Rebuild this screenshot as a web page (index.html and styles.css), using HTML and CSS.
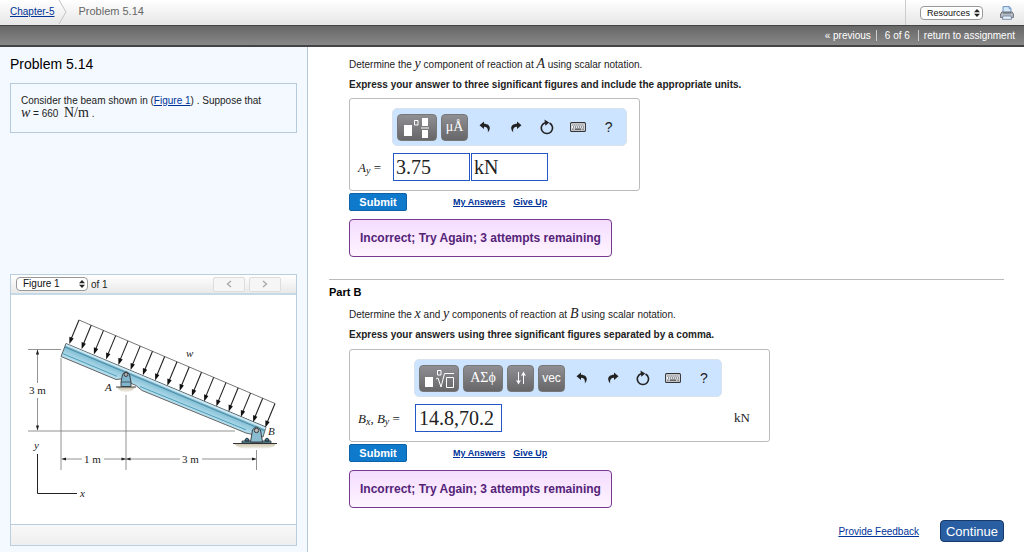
FILE: index.html
```html
<!DOCTYPE html>
<html lang="en">
<head>
<meta charset="utf-8">
<title>Problem 5.14</title>
<link rel="stylesheet" href="styles.css">
</head>
<body>
<svg class="defs" aria-hidden="true">
  <defs>
    <symbol id="undo" viewBox="0 0 12 12"><path d="M5 0.5L0.5 4.2L5 8V5.8C8 5.8 9.4 7.5 8.8 11.5C12.2 8 11.5 2.8 5 2.7Z" fill="#222"/></symbol>
    <symbol id="redo" viewBox="0 0 12 12"><path d="M7 0.5L11.5 4.2L7 8V5.8C4 5.8 2.6 7.5 3.2 11.5C-0.2 8 0.5 2.8 7 2.7Z" fill="#222"/></symbol>
    <symbol id="reset" viewBox="0 0 14 16"><path d="M9.5 4A5.600 5.600 0 1 1 5 3.700" fill="none" stroke="#222" stroke-width="1.600"/><path d="M4.400 0.600L9.200 3.400L5.400 6.800Z" fill="#222"/></symbol>
    <symbol id="keys" viewBox="0 0 16 10"><rect x="0.600" y="0.600" width="14.800" height="8.800" rx="1" fill="#f2f7fc" stroke="#333" stroke-width="1.100"/><path d="M2.300 3H14M3 5H14" stroke="#333" stroke-width="1.100" stroke-dasharray="1.200 0.800"/><path d="M2.300 7.100H3.600M4.600 7.100H11.400M12.400 7.100H13.800" stroke="#333" stroke-width="1.100"/></symbol>
    <symbol id="updown" viewBox="0 0 6 8"><path d="M3 0L6 3.300H0ZM3 8L0 4.700H6Z" fill="#222"/></symbol>
  </defs>
</svg>

<header class="crumbs">
  <nav class="trail" aria-label="Breadcrumb">
    <a href="#">Chapter-5</a>
    <svg class="chevron" viewBox="0 0 10 24" aria-hidden="true"><path d="M1 0L8 12L1 24" fill="none" stroke="#c4c4c4"/></svg>
    <span>Problem 5.14</span>
  </nav>
  <div class="tools">
    <span class="picker resources">
      <select aria-label="Resources"><option>Resources</option></select>
      <svg aria-hidden="true"><use href="#updown"/></svg>
    </span>
    <button class="print" type="button" aria-label="Print">
      <svg viewBox="0 0 14 14" aria-hidden="true">
        <path d="M3 7V0.600H9.200L11 2.400V7Z" fill="#d4e8fa" stroke="#6b91bd"/>
        <path d="M9 0.600V2.600H11" fill="none" stroke="#6b91bd" stroke-width="0.800"/>
        <path d="M1.800 6H12.200L13.400 8V11.500H0.600V8Z" fill="#b9bec5" stroke="#6d737b"/>
        <path d="M2.800 7H11.200" stroke="#55606c"/>
        <path d="M3 10H11L11.600 13.300H2.400Z" fill="#e9f2fb" stroke="#6f86a3" stroke-width="0.900"/>
      </svg>
    </button>
  </div>
</header>
<nav class="pager" aria-label="Assignment">
  <a href="#">« previous</a><span class="count">6 of 6</span><a href="#">return to assignment</a>
</nav>

<div class="columns">
  <aside class="side">
    <h1>Problem 5.14</h1>
    <p class="intro">Consider the beam shown in (<a href="#figure">Figure 1</a>) . Suppose that<br><i class="math">w</i> = 660 &nbsp;<span class="math">N/m</span> .</p>

    <section class="figure" id="figure">
      <div class="figure-bar">
        <span class="picker fig">
          <select id="fig-no"><option>Figure 1</option></select>
          <svg aria-hidden="true"><use href="#updown"/></svg>
        </span>
        <label for="fig-no">of 1</label>
        <div class="steps">
          <button type="button" aria-label="Previous figure"><svg viewBox="0 0 8 8"><path d="M6 1L2.500 4L6 7" /></svg></button>
          <button type="button" aria-label="Next figure"><svg viewBox="0 0 8 8"><path d="M2 1L5.500 4L2 7" /></svg></button>
        </div>
      </div>
      <svg class="drawing" viewBox="11 295 285 229" role="img" aria-label="Inclined beam with distributed load w, supported at A and B">
        <defs>
          <linearGradient id="steel" gradientUnits="userSpaceOnUse" x1="166" y1="384" x2="161" y2="396">
            <stop offset="0" stop-color="#4f9fbd"/><stop offset="0.500" stop-color="#8cc5da"/><stop offset="1" stop-color="#b5dceb"/>
          </linearGradient>
          <linearGradient id="ground" x1="0" y1="0" x2="0" y2="1">
            <stop offset="0" stop-color="#c6bfa9"/><stop offset="1" stop-color="#f4f2ea"/>
          </linearGradient>
          <g id="load"><path d="M0 0L-8.300 20" stroke="#222" stroke-width="1.100"/><path d="M-9.600 24L-9.600 16.800L-5.300 18.500Z" fill="#111"/></g>
        </defs>
        <g stroke="#777" stroke-width="0.800" fill="none">
          <path d="M28 349.500H61M28 431H235M61 358V470M126 395V470M256.500 450V470"/>
          <path d="M37.500 350V383M37.500 398V430M62 459H82M104 459H180M202 459H256"/>
        </g>
        <g fill="#222">
          <path d="M37.500 349.500l-1.600 5h3.200zM37.500 430.500l-1.600-5h3.200zM61.500 459l4.500-1.500v3zM126 459l-4.500-1.500v3zM126 459l4.500-1.500v3zM256.500 459l-4.500-1.500v3z"/>
        </g>
        <path d="M37.500 454V493.500H77" fill="none" stroke="#222"/>
        <path d="M66 343.500L266 427L263 437L246 433L142 390.500L136 385.500L121 379L116 379.500L61 356.500Z" fill="url(#steel)" stroke="#444" stroke-width="0.800"/>
        <path d="M66 344.800L265.500 428.300" stroke="#cfe8f2" stroke-width="2"/>
        <path d="M65 347L264 430.500" stroke="#38758e" stroke-width="0.700"/>
        <path d="M62.500 353.500L117 376.300M140 386.500L246 429.800" stroke="#2d8fac" stroke-width="0.800"/>
        <path d="M79 320L275 403.500" stroke="#555" stroke-width="0.800"/>
        <use href="#load" x="79" y="320"/><use href="#load" x="91.200" y="325.200"/><use href="#load" x="103.500" y="330.400"/><use href="#load" x="115.700" y="335.600"/><use href="#load" x="128" y="340.900"/><use href="#load" x="140.200" y="346.100"/><use href="#load" x="152.500" y="351.300"/><use href="#load" x="164.700" y="356.500"/><use href="#load" x="177" y="361.700"/><use href="#load" x="189.200" y="367"/><use href="#load" x="201.500" y="372.200"/><use href="#load" x="213.700" y="377.400"/><use href="#load" x="226" y="382.600"/><use href="#load" x="238.200" y="387.800"/><use href="#load" x="250.500" y="393.100"/><use href="#load" x="262.700" y="398.300"/><use href="#load" x="275" y="403.500"/>
        <path d="M117 387H135Q133 392 126 392Q119 392 117 387Z" fill="url(#ground)"/>
        <path d="M116 387H136" stroke="#444"/>
        <path d="M121 386.500V382L122.500 374.500Q126 369 129.500 374.500L131 382V386.500Z" fill="#7fb6cd" stroke="#333" stroke-width="0.900"/>
        <path d="M121 382H131" stroke="#333" stroke-width="0.700"/>
        <circle cx="126" cy="374.500" r="2" fill="#aaa" stroke="#333" stroke-width="0.900"/>
        <path d="M234 443.500H276Q274 449 262 448.500H247Q238 449 234 443.500Z" fill="url(#ground)"/>
        <path d="M233 443.500H277" stroke="#333"/>
        <path d="M242 443V441H271V443Z" fill="#5b9cb8" stroke="#333" stroke-width="0.800"/>
        <path d="M245 441V439.500L247 438L249 439.500V441ZM265 441V439.500L267 438L269 439.500V441Z" fill="#397b97" stroke="#222" stroke-width="0.900"/>
        <path d="M250.500 442L252.500 430Q256.500 424 260.500 430L262.500 442Z" fill="#8bbdd2" stroke="#333" stroke-width="0.900"/>
        <circle cx="256.500" cy="430.500" r="2.200" fill="#bbb" stroke="#333" stroke-width="0.900"/>
        <g class="labels">
          <text x="29" y="394">3 m</text><text x="84" y="463">1 m</text><text x="182" y="463">3 m</text>
          <g font-style="italic"><text x="186" y="357">w</text><text x="105" y="391">A</text><text x="268" y="435">B</text><text x="34" y="449">y</text><text x="80" y="497">x</text></g>
        </g>
      </svg>
      <div class="figure-foot"></div>
    </section>
  </aside>

  <main class="main">
    <section class="part">
      <p class="ask">Determine the <i class="math">y</i> component of reaction at <i class="math">A</i> using scalar notation.</p>
      <p class="express">Express your answer to three significant figures and include the appropriate units.</p>
      <form class="answer answer-a">
        <div class="palette">
          <button class="key wide" type="button" aria-label="Templates"><svg viewBox="0 0 30 22"><path d="M2 9H10V20H2ZM20 2H26V10H20ZM20 14H26V22H20ZM19 11.400H27V12.600H19Z" fill="#fff"/><path d="M12.500 4.500H16V9H12.500Z" fill="none" stroke="#fff"/></svg></button>
          <button class="key serif" type="button">μÅ</button>
          <button class="ico" type="button" aria-label="Undo"><svg><use href="#undo"/></svg></button>
          <button class="ico" type="button" aria-label="Redo"><svg><use href="#redo"/></svg></button>
          <button class="ico reset" type="button" aria-label="Reset"><svg><use href="#reset"/></svg></button>
          <button class="ico keys" type="button" aria-label="Keyboard"><svg><use href="#keys"/></svg></button>
          <button class="ico" type="button" aria-label="Help">?</button>
        </div>
        <div class="entry">
          <label for="ay"><i>A<sub>y</sub></i> =</label>
          <input id="ay" type="text" value="3.75">
          <input type="text" value="kN" aria-label="Units">
        </div>
      </form>
      <div class="actions"><button class="submit" type="button">Submit</button><a href="#">My Answers</a><a href="#">Give Up</a></div>
      <p class="verdict">Incorrect; Try Again; 3 attempts remaining</p>
    </section>

    <section class="part part-b">
      <h2>Part B</h2>
      <p class="ask">Determine the <i class="math">x</i> and <i class="math">y</i> components of reaction at <i class="math">B</i> using scalar notation.</p>
      <p class="express">Express your answers using three significant figures separated by a comma.</p>
      <form class="answer answer-b">
        <div class="palette">
          <button class="key wide" type="button" aria-label="Roots"><svg viewBox="0 0 30 22"><path d="M1 10H9V20H1Z" fill="#fff"/><path d="M13.500 3.500H17V8H13.500ZM22.500 10.500H29.500V20.500H22.500ZM12 12L14 11L17 20L20.500 6.500H30" fill="none" stroke="#fff"/></svg></button>
          <button class="key wide serif" type="button">ΑΣϕ</button>
          <button class="key" type="button" aria-label="Subscript and superscript"><svg class="arrows" viewBox="0 0 12 14"><path d="M3.500 1V12M8.500 13V2" fill="none" stroke="#fff"/><path d="M1 9L3.500 10L6 9L3.500 13.500ZM6 5L8.500 4L11 5L8.500 0.500Z" fill="#fff"/></svg></button>
          <button class="key" type="button">vec</button>
          <button class="ico" type="button" aria-label="Undo"><svg><use href="#undo"/></svg></button>
          <button class="ico" type="button" aria-label="Redo"><svg><use href="#redo"/></svg></button>
          <button class="ico reset" type="button" aria-label="Reset"><svg><use href="#reset"/></svg></button>
          <button class="ico keys" type="button" aria-label="Keyboard"><svg><use href="#keys"/></svg></button>
          <button class="ico" type="button" aria-label="Help">?</button>
        </div>
        <div class="entry">
          <label for="bxy"><i>B<sub>x</sub></i>, <i>B<sub>y</sub></i> =</label>
          <input id="bxy" type="text" value="14.8,70.2">
          <span class="unit">kN</span>
        </div>
      </form>
      <div class="actions"><button class="submit" type="button">Submit</button><a href="#">My Answers</a><a href="#">Give Up</a></div>
      <p class="verdict">Incorrect; Try Again; 3 attempts remaining</p>
    </section>

    <footer class="foot"><a href="#">Provide Feedback</a><button class="continue" type="button">Continue</button></footer>
  </main>
</div>
</body>
</html>
```
FILE: styles.css
```css
* { box-sizing: border-box; }
body { margin: 0; min-height: 100vh; display: flex; flex-direction: column; font: 10px/13px "Liberation Sans", Arial, sans-serif; color: #222; background: #fff; }
p, h1, h2 { margin: 0; }
button, select, input { font-family: inherit; margin: 0; }
button { padding: 0; border: 0; background: none; }
a { color: #003399; }
.defs { position: absolute; width: 0; height: 0; }
.math { font-family: "Liberation Serif", serif; font-size: 14px; line-height: 12px; }

.crumbs { display: flex; justify-content: space-between; height: 25px; background: linear-gradient(#fff, #e6e6e6); }
.trail { display: flex; align-items: center; padding-left: 10px; padding-bottom: 2px; color: #666; }
.trail span { padding-left: 10px; font-size: 11px; }
.chevron { width: 10px; height: 24px; margin-left: 4px; }
.tools { display: flex; align-items: center; gap: 17px; padding: 0 10px 0 14px; border-left: 1px solid #ccc; }
.picker { position: relative; display: flex; }
.picker select { appearance: none; width: 100%; height: 14px; padding: 0 6px; border: 1px solid #999; border-radius: 4px; background: #fff; color: #111; font-size: 10px; line-height: 12px; }
.picker svg { position: absolute; right: 3px; top: 3px; width: 6px; height: 8px; pointer-events: none; }
.resources { width: 63px; }
.resources select { font-size: 9px; }
.print svg { display: block; width: 14px; height: 14px; }

.pager { display: flex; justify-content: flex-end; align-items: center; height: 22px; padding-right: 9px; background: linear-gradient(#666, #888); border-top: 1px solid #444; border-bottom: 2px solid #444; }
.pager a { color: #fff; text-decoration: none; }
.pager .count { margin: 0 5px; padding: 0 8px; color: #fff; border: solid #ccc; border-width: 0 1px; line-height: 11px; }

.columns { flex: 1; display: grid; grid-template-columns: 308px minmax(0, 1fr); }
.side { display: flex; flex-direction: column; padding: 8px 10px 6px; background: #f4f9ff; border-right: 1px solid #b5cadb; }
.side h1 { font-size: 14px; font-weight: 400; line-height: 18px; color: #000; }
.intro { margin-top: 10px; padding: 10px 10px 12px; border: 1px solid #b5cadb; }
.figure { margin-top: auto; border: 1px solid #b9cfe0; background: #fff; }
.figure-bar { display: flex; align-items: center; gap: 3px; height: 20px; padding: 0 15px 0 5px; background: linear-gradient(#fff, #e9e9e9); border-bottom: 2px solid #c5d9e7; }
.fig { width: 72px; }
.steps { display: flex; gap: 4px; margin-left: auto; }
.steps button { display: grid; place-items: center; width: 32px; height: 15px; border: 1px solid #ddd; border-radius: 2px; background: #f6f6f6; }
.steps svg { width: 8px; height: 8px; fill: none; stroke: #aaa; stroke-width: 1.4; }
.drawing { display: block; width: 100%; }
.labels { font: 11px "Liberation Serif", serif; fill: #222; }
.figure-foot { height: 21px; background: linear-gradient(#f8f8f8, #eee); border-top: 1px solid #b9cfe0; }

.main { display: flex; flex-direction: column; padding: 10px 20px 10px 21px; }
.part { padding-left: 20px; }
.part h2 { margin: 6px 0 8px -20px; font-size: 11px; line-height: 13px; color: #000; }
.ask { line-height: 15px; }
.express { margin-top: 6px; font-weight: 700; line-height: 13px; }
.answer { border: 1px solid #bbb; border-radius: 3px; height: 93px; padding-top: 9px; }
.answer-a { width: 291px; margin-top: 7px; padding-left: 42px; }
.answer-b { width: 421px; margin-top: 8px; padding-left: 64px; }
.palette { display: flex; align-items: center; gap: 4px; width: 235px; height: 38px; padding: 0 4px; background: #cce4ff; border: 1px solid #d8e2ec; border-radius: 5px; }
.answer-b .palette { width: 308px; }
.key { display: grid; place-items: center; width: 27px; height: 27px; border-radius: 4px; border: 1px solid #777; background: linear-gradient(#8f8f93, #67676a); color: #fff; font-size: 12px; }
.key.wide { width: 40px; }
.key.serif { font-family: "Liberation Serif", serif; font-size: 14px; }
.key svg { width: 30px; height: 22px; }
.key svg.arrows { width: 12px; height: 14px; }
.ico { display: grid; place-items: center; flex: 1; height: 27px; color: #222; font-size: 14px; }
.ico svg { width: 12px; height: 12px; }
.ico.reset svg { width: 14px; height: 16px; }
.ico.keys svg { width: 16px; height: 10px; }
.entry { display: flex; align-items: center; gap: 1px; margin-top: 7px; }
.entry label { white-space: nowrap; font-family: "Liberation Serif", serif; font-size: 13px; }
.answer-a label { width: 34px; margin-left: -34px; }
.answer-b label { width: 56px; margin-left: -56px; }
.entry sub { font-size: 10px; line-height: 0; vertical-align: -2px; }
.entry input { width: 77px; height: 28px; padding: 0 2px; border: 1px solid #2457c5; background: #fff; color: #222; font: 20px "Liberation Serif", serif; }
.answer-b input { width: 87px; padding: 0 3px; }
.unit { margin-left: auto; padding-right: 19px; font: 13px "Liberation Serif", serif; }
.actions { display: flex; align-items: center; gap: 8px; margin-top: 2px; font-size: 9px; font-weight: 700; }
.submit { width: 58px; height: 18px; margin-right: 38px; border: 1px solid #0b62a8; border-radius: 2px; background: #0f79cc; color: #fff; font-size: 11px; font-weight: 700; }
.verdict { width: fit-content; margin-top: 8px; padding: 10px; border: 1px solid #75398f; border-radius: 4px; background: linear-gradient(#f4dcff, #fff4ff); color: #542378; font-size: 12px; font-weight: 700; line-height: 16px; }
.part-b { position: relative; margin-top: 22px; padding-top: 1px; }
.part-b::before { content: ""; position: absolute; left: 0; right: 0; top: 0; border-top: 1px solid #bbb; }
.foot { display: flex; justify-content: flex-end; align-items: center; gap: 21px; margin-top: auto; }
.continue { width: 64px; height: 22px; border: 1px solid #17396b; border-radius: 4px; background: #2a5ea3; color: #fff; font-size: 13px; }
```
